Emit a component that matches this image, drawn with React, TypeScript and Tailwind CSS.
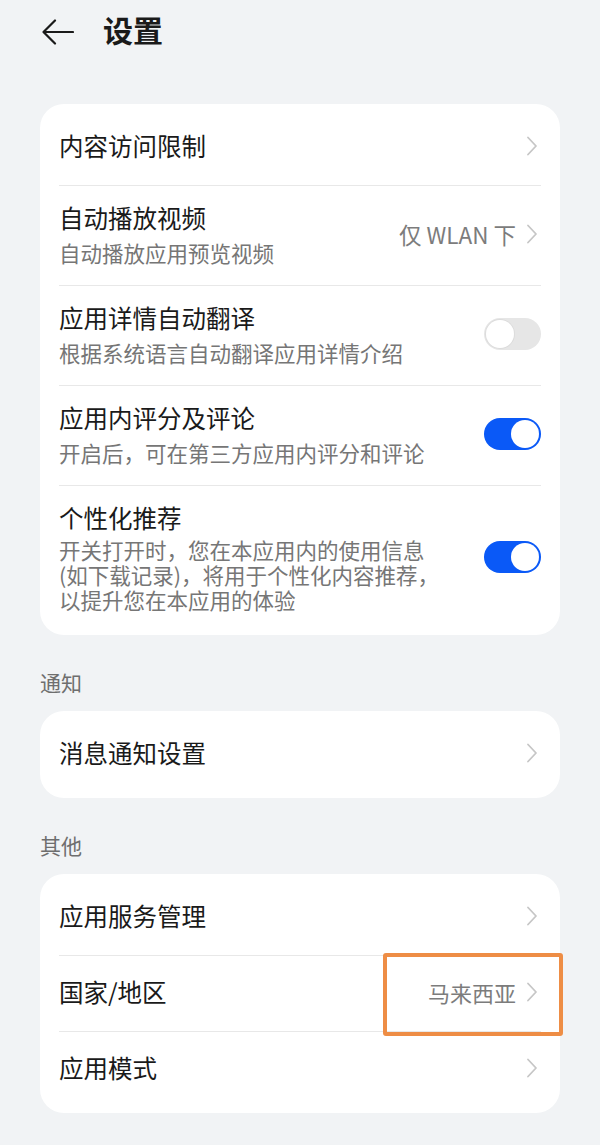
import React from 'react';

const FONT = '"Noto Sans CJK SC", "Noto Sans", sans-serif';

const Chevron = () => (
    <svg width="12" height="20" viewBox="0 0 12 20" className="flex-shrink-0">
        <path d="M2 1.5 L10 10 L2 18.5" fill="none" stroke="#c6c6c6" strokeWidth="1.8" strokeLinecap="round" strokeLinejoin="round" />
    </svg>
);

const Toggle = ({ on }: { on: boolean }) => (
    <div
        className={`flex-shrink-0 w-[57px] h-[32px] rounded-full p-[2px] flex items-center ${on ? 'bg-[#0a59f7] justify-end' : 'bg-[#e6e6e6] justify-start'}`}
    >
        <div className={`w-[28px] h-[28px] rounded-full bg-white ${on ? '' : 'shadow-[0_0_0_1px_#dcdcdc]'}`} />
    </div>
);

const Divider = () => <div className="h-px bg-[#e8e8e8]" />;

interface NavRowProps {
    title: string;
    value?: string;
    highlight?: boolean;
}

const NavRow = ({ title, value, highlight }: NavRowProps) => (
    <div className="relative h-[75px] pb-[4px] flex items-center justify-between">
        <span className="text-[24.5px] leading-[34px] text-[#1a1a1a]">{title}</span>
        <div className="flex items-center gap-[10px] pr-[3px]">
            {value && <span className="text-[22px] leading-[30px] text-[#7c7c7c]">{value}</span>}
            <Chevron />
        </div>
        {highlight && (
            <div className="absolute left-[324px] right-[-22px] top-[-3px] bottom-[-5px] border-[4px] border-[#ee8d45] rounded-[3px]" />
        )}
    </div>
);

interface DetailRowProps {
    title: string;
    lines: string[];
    right: React.ReactNode;
}

const DetailRow = ({ title, lines, right }: DetailRowProps) => {
    const multi = lines.length > 1;
    return (
        <div className={`flex items-center justify-between gap-4 pt-[15px] ${multi ? 'pb-[17px]' : 'pb-[18px]'}`}>
            <div className="flex flex-col">
                <span className="text-[24.5px] leading-[34px] text-[#1a1a1a]">{title}</span>
                <div className={`text-[21.5px] text-[#767676] ${multi ? 'mt-[2px] leading-[25px]' : 'mt-[4px] leading-[28px]'}`}>
                    {lines.map((line, i) => (
                        <React.Fragment key={line}>
                            {i > 0 && <br />}
                            {line}
                        </React.Fragment>
                    ))}
                </div>
            </div>
            {right}
        </div>
    );
};

const Card = ({ children }: { children: React.ReactNode }) => (
    <div className="mx-[40px] bg-white rounded-[24px] px-[19px] py-[6px]">{children}</div>
);

const SectionLabel = ({ text }: { text: string }) => (
    <div className="px-[40px] pt-[33px] pb-[15px] text-[21px] leading-[28px] text-[#6e6e6e]">{text}</div>
);

export default function App() {
    return (
        <div className="w-[600px] min-h-[1145px] bg-[#f1f3f5]" style={{ fontFamily: FONT }}>
            <header className="h-[64px] flex items-center pl-[42px]">
                <svg width="32" height="26" viewBox="0 0 32 26">
                    <path d="M13 1.5 L1.5 13 L13 24.5 M1.5 13 H31" fill="none" stroke="#1a1a1a" strokeWidth="2.2" strokeLinecap="round" strokeLinejoin="round" />
                </svg>
                <h1 className="ml-[29px] mb-[7px] text-[30px] leading-[40px] font-bold text-[#1a1a1a]">设置</h1>
            </header>

            <div className="mt-[40px]">
                <Card>
                    <NavRow title="内容访问限制" />
                    <Divider />
                    <DetailRow
                        title="自动播放视频"
                        lines={['自动播放应用预览视频']}
                        right={
                            <div className="flex items-center gap-[10px] pr-[3px]">
                                <span className="text-[22.5px] leading-[30px] text-[#7c7c7c]">仅 WLAN 下</span>
                                <Chevron />
                            </div>
                        }
                    />
                    <Divider />
                    <DetailRow title="应用详情自动翻译" lines={['根据系统语言自动翻译应用详情介绍']} right={<Toggle on={false} />} />
                    <Divider />
                    <DetailRow title="应用内评分及评论" lines={['开启后，可在第三方应用内评分和评论']} right={<Toggle on />} />
                    <Divider />
                    <DetailRow
                        title="个性化推荐"
                        lines={['开关打开时，您在本应用内的使用信息', '(如下载记录)，将用于个性化内容推荐，', '以提升您在本应用的体验']}
                        right={<Toggle on />}
                    />
                </Card>
            </div>

            <SectionLabel text="通知" />
            <Card>
                <NavRow title="消息通知设置" />
            </Card>

            <SectionLabel text="其他" />
            <Card>
                <NavRow title="应用服务管理" />
                <Divider />
                <NavRow title="国家/地区" value="马来西亚" highlight />
                <Divider />
                <NavRow title="应用模式" />
            </Card>
        </div>
    );
}
